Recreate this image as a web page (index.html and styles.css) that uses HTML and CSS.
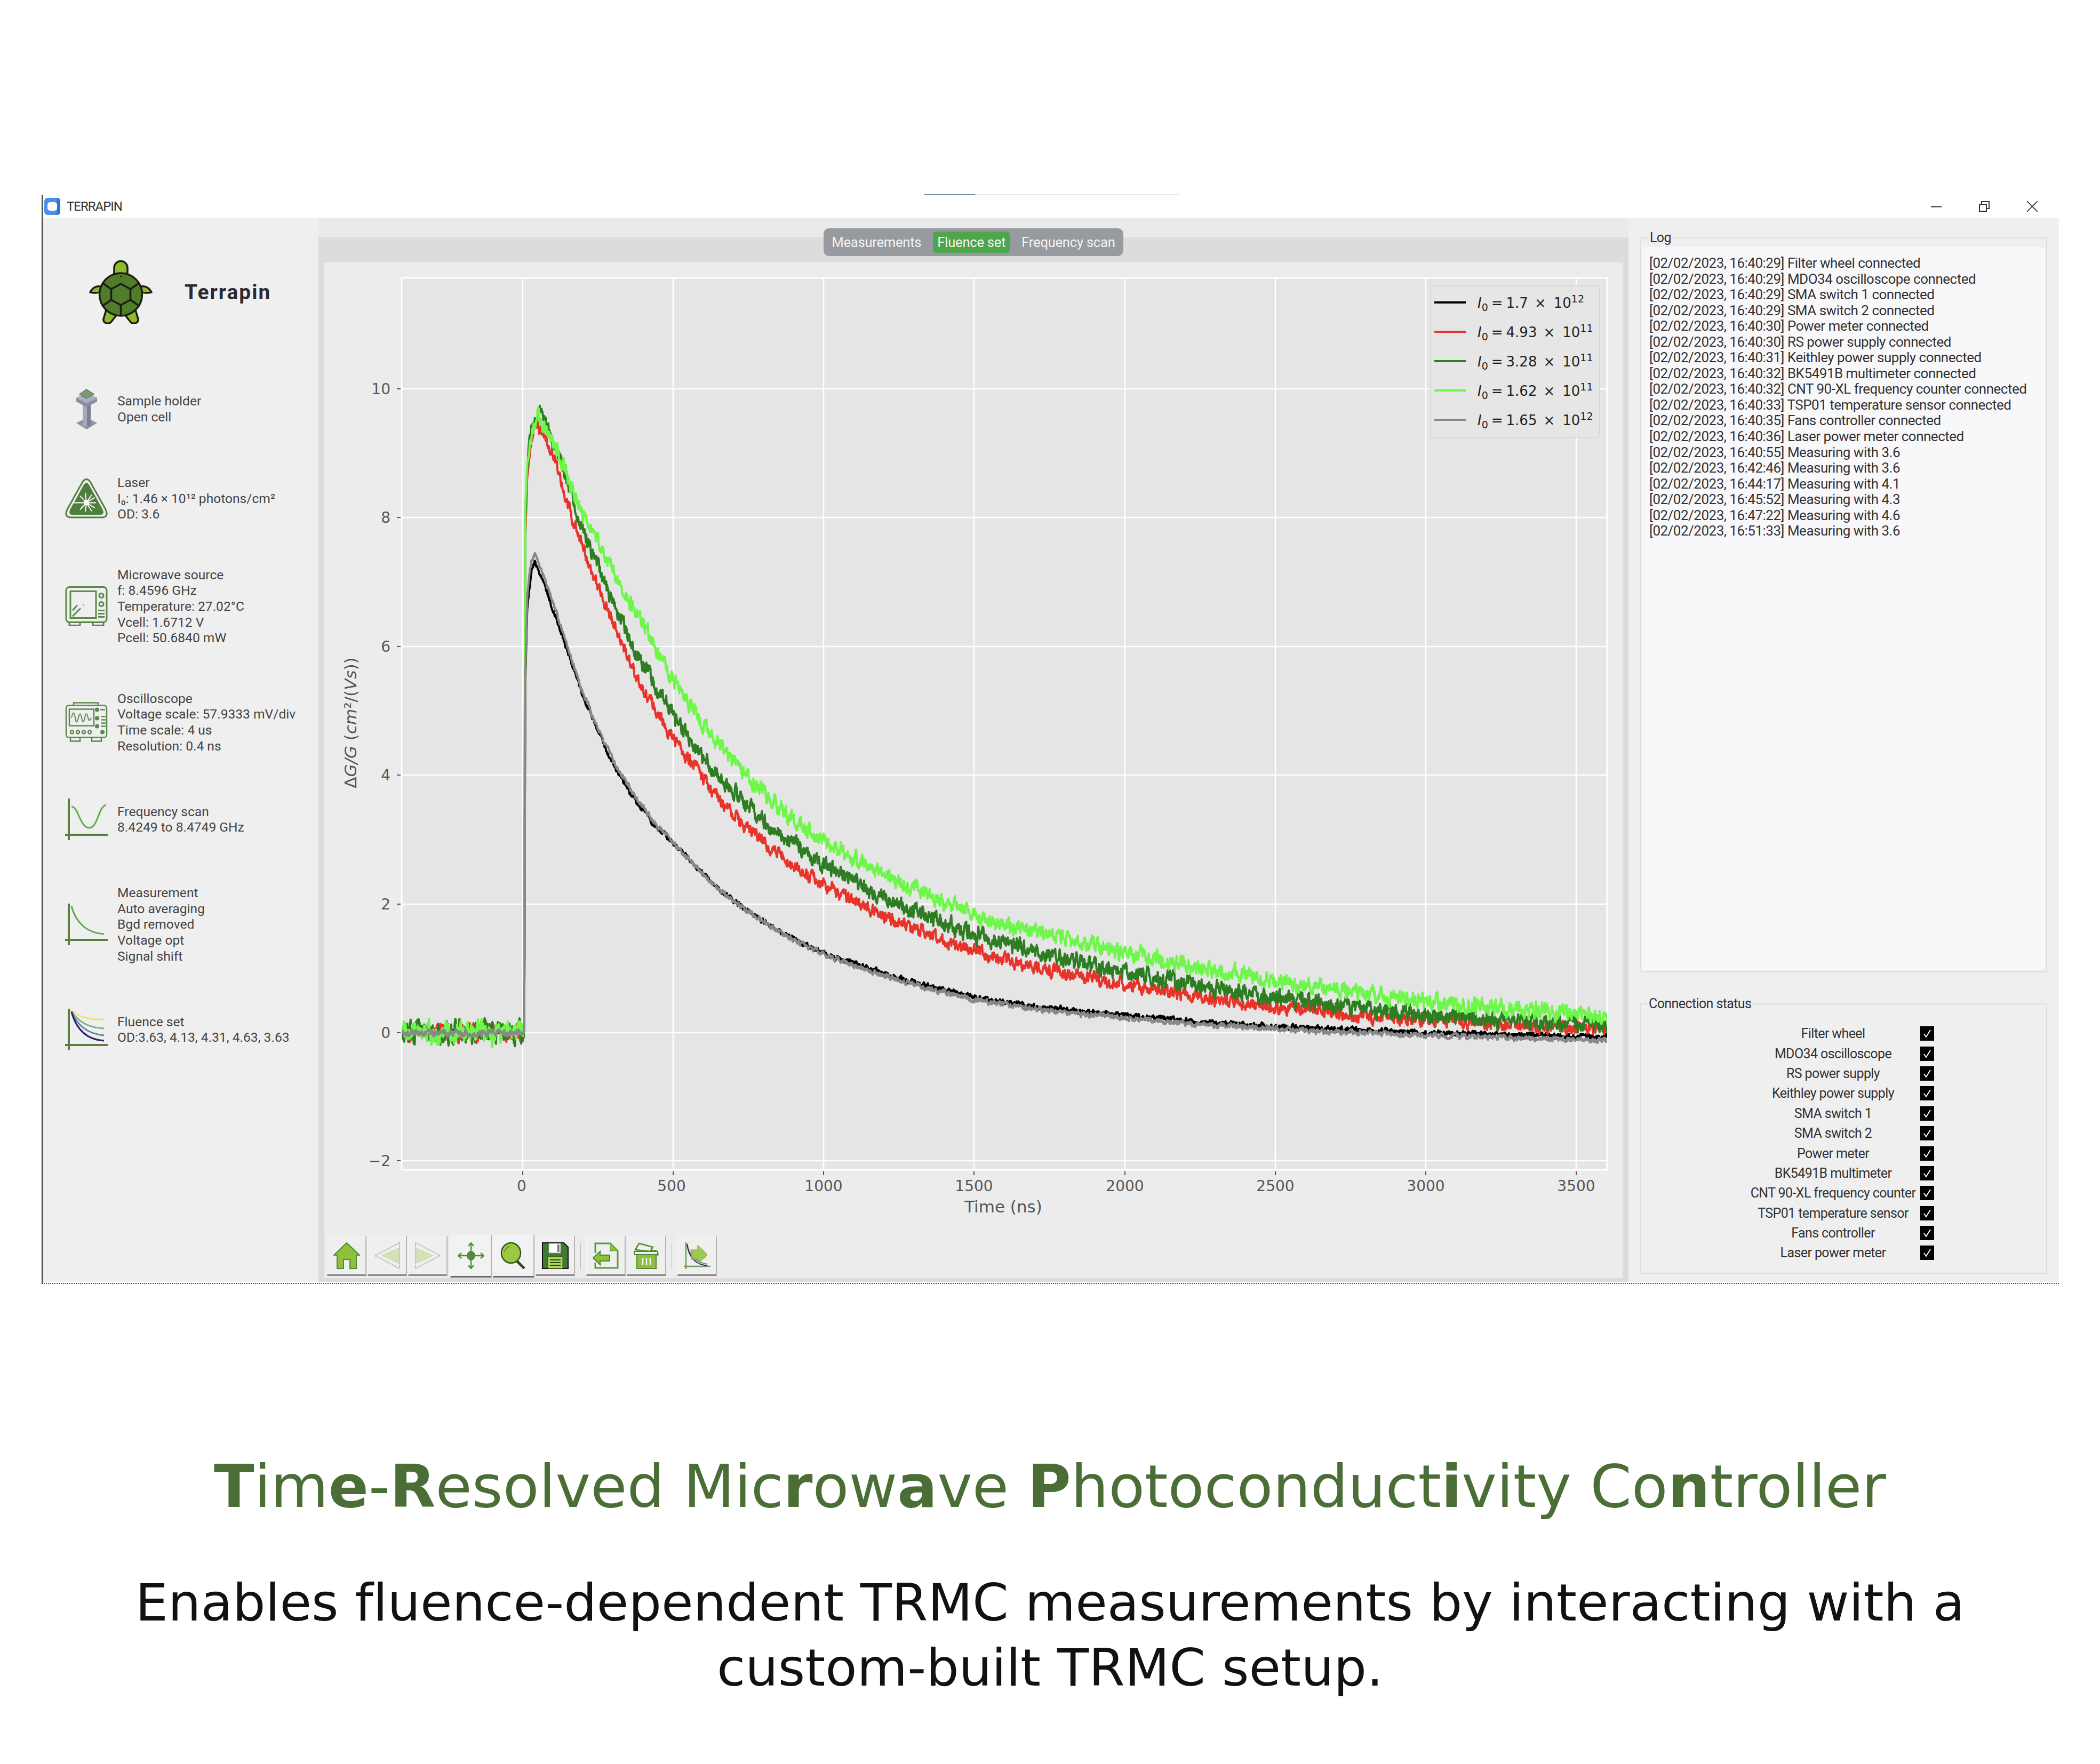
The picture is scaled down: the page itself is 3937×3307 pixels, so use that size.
FILE: index.html
```html
<!DOCTYPE html>
<html lang="en">
<head>
  <meta charset="UTF-8" />
  <title>Terrapin</title>
  <link rel="stylesheet" href="styles.css">
</head>
<body>
  <svg class="defs">
    <symbol id="tick" viewBox="0 0 26 27"><path d="M7 14l4 6 8-13" fill="none" stroke="#fff" stroke-width="2"/></symbol>
    <symbol id="axes" viewBox="0 0 80 78"><path d="M7 0v78M0 68h80" fill="none" stroke="#5a7f3f" stroke-width="4"/></symbol>
  </svg>

  <div class="window">
    <span class="top-dots"></span>
    <div class="titlebar">
      <svg class="app-icon" viewBox="0 0 30 32"><rect width="30" height="32" rx="6" fill="#4a90e6"/><path d="M24 0a6 6 0 0 1 6 6v20a6 6 0 0 1-6 6z" fill="#2f78cf"/><rect x="6" y="8" width="18" height="16" rx="5" fill="#fff"/></svg>
      <span class="app-name">TERRAPIN</span>
      <div class="win-controls">
        <svg viewBox="0 0 20 20"><path d="M0 10.5h20" stroke="#333" stroke-width="2"/></svg>
        <svg viewBox="0 0 20 20"><path d="M1 6h13v13H1zM5 6V1h14v13h-5" fill="none" stroke="#333" stroke-width="2"/></svg>
        <svg viewBox="0 0 20 20"><path d="M0 0l20 20M20 0L0 20" stroke="#333" stroke-width="1.8"/></svg>
      </div>
    </div>

    <div class="content">
      <aside class="sidebar">
        <div class="brand">
          <svg class="turtle" viewBox="0 0 119 119">
            <g stroke="#1c1c12" stroke-width="3.5" stroke-linejoin="round" fill="#8dbb2e">
              <path d="M47 27V14a12.500 12.500 0 0 1 25 0v13z"/>
              <path d="M24 50C14 46 6 52 2 60c8 2 18 1 25-3z"/>
              <path d="M95 50c10-4 18 2 22 10-8 2-18 1-25-3z"/>
              <path d="M33 90l-6 20c-1 7 8 11 14 6l11-14z"/>
              <path d="M86 90l6 20c1 7-8 11-14 6L67 102z"/>
              <circle cx="59.500" cy="64" r="40" fill="#4f7d2c"/>
              <path d="M59.500 44l18 10v20l-18 10-18-10V54z" fill="#4f7d2c"/>
              <path d="M41.500 54L26 43M77.500 54L93 43M41.500 74L26 85M77.500 74L93 85M59.500 84v20" fill="none"/>
            </g>
            <circle cx="59.500" cy="30" r="1.500" fill="#1c1c12"/>
          </svg>
          <span class="brand-name">Terrapin</span>
        </div>

        <div class="instrument">
          <div class="inst-icon">
            <svg class="holder" viewBox="0 0 39 76">
              <path d="M0 64l19.500-10L39 64 19.500 76z" fill="#8f93a6"/>
              <path d="M12 28h8v42h-8z" fill="#a4a8b8"/><path d="M20 28h7v42h-7z" fill="#7b7f93"/>
              <path d="M0 17L19.500 7 39 17v7L19.500 34 0 24z" fill="#8a8ea2"/>
              <path d="M0 17L19.500 7 39 17 19.500 27z" fill="#abafbd"/>
              <path d="M6 10L19 1l14 9-14 8z" fill="#7d9a76" stroke="#5e7c6a" stroke-width="1.500"/>
            </svg>
          </div>
          <p>Sample holder<br>Open cell</p>
        </div>

        <div class="instrument">
          <div class="inst-icon">
            <svg viewBox="0 0 80 79">
              <path d="M33 8q7-9 14 0l29 52q8 16-8 16H12q-16 0-8-16z" fill="none" stroke="#4f7f3f" stroke-width="3"/>
              <path d="M35 14q5-7 10 0l26 47q4 10-5 10H14q-9 0-5-10z" fill="#4f7f3f"/>
              <path d="M14 48h26M40 48l18 0M40 48l16-10M40 48l10-15M40 48l-2-18M40 48l-12-13M40 48l16 10M40 48l10 16M40 48l-2 17M40 48l-12 13" stroke="#fff" stroke-width="2"/>
              <circle cx="40" cy="48" r="5" fill="#fff"/>
            </svg>
          </div>
          <p>Laser<br>I₀: 1.46 × 10¹² photons/cm²<br>OD: 3.6</p>
        </div>

        <div class="instrument">
          <div class="inst-icon">
            <svg viewBox="0 0 80 77">
              <g fill="none" stroke="#5a8a4a" stroke-width="3">
                <path d="M8 68v6h20v-6M52 68v6h20v-6"/>
                <rect x="2" y="2" width="76" height="66" rx="6"/>
                <rect x="10" y="10" width="48" height="50"/>
                <path d="M14 46l9-10M14 57l15-15M34 36l1-1"/>
                <circle cx="68" cy="18" r="4"/><circle cx="68" cy="34" r="4"/>
                <path d="M62 46h12M62 52h12M62 58h12"/>
              </g>
            </svg>
          </div>
          <p>Microwave source<br>f: 8.4596 GHz<br>Temperature: 27.02°C<br>Vcell: 1.6712 V<br>Pcell: 50.6840 mW</p>
        </div>

        <div class="instrument">
          <div class="inst-icon">
            <svg viewBox="0 0 80 77">
              <g fill="none" stroke="#5a8a4a" stroke-width="2.500">
                <path d="M16 7V2h46v5M10 67v7h18v-7M50 67v7h18v-7"/>
                <rect x="2" y="7" width="76" height="60" rx="5"/>
                <rect x="8" y="14" width="46" height="31"/>
                <path d="M12 30c3-12 5-12 7 0s4 9 6 0 4-10 6 0 4 10 6 0 4-9 6 0 4 4 6 0" stroke-width="2"/>
                <circle cx="13" cy="57" r="3"/><circle cx="24" cy="57" r="3"/><circle cx="35" cy="57" r="3"/><circle cx="46" cy="57" r="3"/>
                <path d="M66 15h9M68 28h8M68 34h8M68 40h8M68 46h8"/>
              </g>
              <g fill="#5a8a4a"><circle cx="60" cy="15" r="4"/><circle cx="60" cy="31" r="4"/><circle cx="60" cy="46" r="4"/><circle cx="70" cy="57" r="4"/></g>
            </svg>
          </div>
          <p>Oscilloscope<br>Voltage scale: 57.9333 mV/div<br>Time scale: 4 us<br>Resolution: 0.4 ns</p>
        </div>

        <div class="instrument">
          <div class="inst-icon">
            <svg viewBox="0 0 80 78">
              <use href="#axes"/>
              <path d="M12 15c13 0 16 40 33 40s17-40 32-43" fill="none" stroke="#62a84b" stroke-width="3"/>
            </svg>
          </div>
          <p>Frequency scan<br>8.4249 to 8.4749 GHz</p>
        </div>

        <div class="instrument">
          <div class="inst-icon">
            <svg viewBox="0 0 80 78">
              <use href="#axes"/>
              <path d="M12 5c8 30 28 50 61 52" fill="none" stroke="#62a84b" stroke-width="3"/>
            </svg>
          </div>
          <p>Measurement<br>Auto averaging<br>Bgd removed<br>Voltage opt<br>Signal shift</p>
        </div>

        <div class="instrument">
          <div class="inst-icon">
            <svg viewBox="0 0 80 78">
              <use href="#axes"/>
              <g fill="none" stroke-width="3">
                <path d="M12 3c13 12 33 18 61 17" stroke="#f0e36a"/>
                <path d="M12 5c13 20 33 31 61 32" stroke="#7fae8f"/>
                <path d="M12 5c10 25 28 42 61 45" stroke="#5f8aa0"/>
                <path d="M12 6c8 29 26 52 61 54" stroke="#33206b"/>
              </g>
            </svg>
          </div>
          <p>Fluence set<br>OD:3.63, 4.13, 4.31, 4.63, 3.63</p>
        </div>
      </aside>

      <main class="pane">
        <nav class="tabs">
          <span class="tab">Measurements</span>
          <span class="tab tab-active">Fluence set</span>
          <span class="tab">Frequency scan</span>
        </nav>
        <div class="frame">
          <svg class="chart" viewBox="608 492 2434 1825">
            <defs><clipPath id="plot-clip"><rect x="753" y="521" width="2260" height="1672"/></clipPath></defs>
            <rect x="753" y="521" width="2260" height="1672" fill="#e5e5e5" stroke="#fff" stroke-width="3"/>
            <path class="grid" d="M980 521v1672M1262 521v1672M1544 521v1672M1826 521v1672M2109 521v1672M2391 521v1672M2673 521v1672M2955 521v1672M753 729h2260M753 970h2260M753 1212h2260M753 1453h2260M753 1695h2260M753 1936h2260M753 2176h2260"/>
            <path class="ticks" d="M980 2196v7M1262 2196v7M1544 2196v7M1826 2196v7M2109 2196v7M2391 2196v7M2673 2196v7M2955 2196v7M744 729h7M744 970h7M744 1212h7M744 1453h7M744 1695h7M744 1936h7M744 2176h7"/>

            <g class="ytick">
              <text x="732" y="739">10</text>
              <text x="732" y="980">8</text>
              <text x="732" y="1222">6</text>
              <text x="732" y="1463">4</text>
              <text x="732" y="1705">2</text>
              <text x="732" y="1946">0</text>
              <text x="732" y="2186">−2</text>
            </g>
            <g class="xtick">
              <text x="978" y="2233">0</text>
              <text x="1259" y="2233">500</text>
              <text x="1544" y="2233">1000</text>
              <text x="1826" y="2233">1500</text>
              <text x="2109" y="2233">2000</text>
              <text x="2391" y="2233">2500</text>
              <text x="2673" y="2233">3000</text>
              <text x="2955" y="2233">3500</text>
            </g>
            <text class="axis-label" x="1881" y="2273">Time (ns)</text>
            <text class="axis-label" transform="rotate(-90 668 1355)" x="668" y="1355">Δ<tspan class="math">G/G</tspan> (<tspan class="math">cm</tspan>²/(<tspan class="math">Vs</tspan>))</text>

            <g id="traces" clip-path="url(#plot-clip)"></g>

            <rect x="2682" y="536" width="317" height="284" rx="5" fill="#e5e5e5" fill-opacity="0.9" stroke="#d9d9d9" stroke-width="2"/>
            <g stroke-width="4">
              <path d="M2689 567h59" stroke="#000"/>
              <path d="M2689 622h59" stroke="#e8332a"/>
              <path d="M2689 677h59" stroke="#2e7d22"/>
              <path d="M2689 732h59" stroke="#6ef74a"/>
              <path d="M2689 787h59" stroke="#888"/>
            </g>
            <g class="legend-text">
              <text x="2770" y="577"><tspan class="math">I</tspan><tspan class="sub" dy="6">0</tspan><tspan dx="6" dy="-6">=</tspan><tspan dx="6">1.7</tspan><tspan dx="12">×</tspan><tspan dx="14">10</tspan><tspan class="sup" dy="-10">12</tspan></text>
              <text x="2770" y="632"><tspan class="math">I</tspan><tspan class="sub" dy="6">0</tspan><tspan dx="6" dy="-6">=</tspan><tspan dx="6">4.93</tspan><tspan dx="12">×</tspan><tspan dx="14">10</tspan><tspan class="sup" dy="-10">11</tspan></text>
              <text x="2770" y="687"><tspan class="math">I</tspan><tspan class="sub" dy="6">0</tspan><tspan dx="6" dy="-6">=</tspan><tspan dx="6">3.28</tspan><tspan dx="12">×</tspan><tspan dx="14">10</tspan><tspan class="sup" dy="-10">11</tspan></text>
              <text x="2770" y="742"><tspan class="math">I</tspan><tspan class="sub" dy="6">0</tspan><tspan dx="6" dy="-6">=</tspan><tspan dx="6">1.62</tspan><tspan dx="12">×</tspan><tspan dx="14">10</tspan><tspan class="sup" dy="-10">11</tspan></text>
              <text x="2770" y="797"><tspan class="math">I</tspan><tspan class="sub" dy="6">0</tspan><tspan dx="6" dy="-6">=</tspan><tspan dx="6">1.65</tspan><tspan dx="12">×</tspan><tspan dx="14">10</tspan><tspan class="sup" dy="-10">12</tspan></text>
            </g>
          </svg>

          <div class="toolbar">
            <button class="tool">
              <svg viewBox="0 0 50 50"><path d="M25 1l24 23h-6v25H31V32H19v17H7V24H1z" fill="#8fc03c" stroke="#4f8a2c" stroke-width="2"/></svg>
            </button>
            <button class="tool">
              <svg viewBox="0 0 50 50"><path d="M48 1L2 25l46 24z" fill="none" stroke="#a3b596" stroke-width="2" stroke-dasharray="2 1.500"/><path d="M46 11L16 25l30 14z" fill="#d3e4b4" stroke="#a3b596" stroke-dasharray="2 1.500"/></svg>
            </button>
            <button class="tool">
              <svg viewBox="0 0 50 50"><path d="M2 1l46 24L2 49z" fill="none" stroke="#a3b596" stroke-width="2" stroke-dasharray="2 1.500"/><path d="M4 11l30 14L4 39z" fill="#d3e4b4" stroke="#a3b596" stroke-dasharray="2 1.500"/></svg>
            </button>
            <button class="tool tool-on tool-first">
              <svg viewBox="0 0 50 50"><ellipse cx="25" cy="25" rx="8" ry="9" fill="#4f8a3c"/><path d="M25 1v48M1 25h48M20 7l5-6 5 6M20 43l5 6 5-6M7 20l-6 5 6 5M43 20l6 5-6 5" fill="none" stroke="#4f8a3c" stroke-width="2.500"/></svg>
            </button>
            <button class="tool tool-on">
              <svg viewBox="0 0 50 50"><path d="M30 34l15 15" stroke="#2d4a20" stroke-width="5"/><ellipse cx="20" cy="20" rx="18" ry="19" fill="#9bc840" stroke="#33531f" stroke-width="2.500"/><path d="M8 18c1-6 5-9 10-10" fill="none" stroke="#33531f"/></svg>
            </button>
            <button class="tool">
              <svg viewBox="0 0 50 50"><path d="M1 1h40l8 8v40H1z" fill="#3f7a2e" stroke="#111" stroke-width="2"/><path d="M13 2h22v18H13z" fill="#fff" stroke="#9a9a9a"/><path d="M28 4h5v14h-5z" fill="#8c8c8c"/><path d="M11 27h28v22H11z" fill="#b3d452" stroke="#2a4a1c"/><path d="M15 33h20M15 38h20M15 43h20" stroke="#2a4a1c" stroke-width="2"/></svg>
            </button>
            <span class="tool-sep"></span>
            <button class="tool">
              <svg viewBox="0 0 50 50"><path d="M5 20V2h28l14 14v32H5V38" fill="none" stroke="#5a9a3c" stroke-width="3"/><path d="M33 2l14 14H33z" fill="#8fc03c" stroke="#5a9a3c"/><path d="M1 29l13-12v7h18v11H14v7z" fill="#8fc03c" stroke="#4f8a2c" stroke-width="2"/></svg>
            </button>
            <button class="tool">
              <svg viewBox="0 0 50 50"><path d="M4 14l7-12 26 7-5 8zM32 17c8-4 16-1 14 8" fill="#efefef" stroke="#4f8a2c" stroke-width="2.500"/><path d="M2 17h44v6H2z" fill="#efefef" stroke="#4f8a2c" stroke-width="2"/><path d="M7 23h36v26H7z" fill="#8fc03c" stroke="#4f8a2c" stroke-width="2"/><path d="M18 29v14M25 29v14M32 29v14" stroke="#f2f2f2" stroke-width="2.500"/></svg>
            </button>
            <span class="tool-sep"></span>
            <button class="tool">
              <svg viewBox="0 0 50 50"><path d="M4 0v50M0 45h50" stroke="#6e9a55" stroke-width="2.500"/><path d="M6 3c4 14 14 26 38 27" fill="none" stroke="#f0e36a" stroke-width="2"/><path d="M6 3c4 22 16 34 38 38" fill="none" stroke="#5f8aa0" stroke-width="2"/><path d="M6 3c3 24 14 38 38 41" fill="none" stroke="#33206b" stroke-width="2"/><path d="M14 14h12V5l18 18-18 18v-9H14z" fill="#8fc03c" fill-opacity="0.85" stroke="#6e9a55"/></svg>
            </button>
          </div>
        </div>
      </main>

      <aside class="side-right">
        <fieldset class="group log-group">
          <legend>Log</legend>
<pre class="log">[02/02/2023, 16:40:29] Filter wheel connected
[02/02/2023, 16:40:29] MDO34 oscilloscope connected
[02/02/2023, 16:40:29] SMA switch 1 connected
[02/02/2023, 16:40:29] SMA switch 2 connected
[02/02/2023, 16:40:30] Power meter connected
[02/02/2023, 16:40:30] RS power supply connected
[02/02/2023, 16:40:31] Keithley power supply connected
[02/02/2023, 16:40:32] BK5491B multimeter connected
[02/02/2023, 16:40:32] CNT 90-XL frequency counter connected
[02/02/2023, 16:40:33] TSP01 temperature sensor connected
[02/02/2023, 16:40:35] Fans controller connected
[02/02/2023, 16:40:36] Laser power meter connected
[02/02/2023, 16:40:55] Measuring with 3.6
[02/02/2023, 16:42:46] Measuring with 3.6
[02/02/2023, 16:44:17] Measuring with 4.1
[02/02/2023, 16:45:52] Measuring with 4.3
[02/02/2023, 16:47:22] Measuring with 4.6
[02/02/2023, 16:51:33] Measuring with 3.6</pre>
        </fieldset>
        <fieldset class="group status-group">
          <legend>Connection status</legend>
          <div class="status-list">
            <span>Filter wheel</span><svg class="check"><use href="#tick"/></svg>
            <span>MDO34 oscilloscope</span><svg class="check"><use href="#tick"/></svg>
            <span>RS power supply</span><svg class="check"><use href="#tick"/></svg>
            <span>Keithley power supply</span><svg class="check"><use href="#tick"/></svg>
            <span>SMA switch 1</span><svg class="check"><use href="#tick"/></svg>
            <span>SMA switch 2</span><svg class="check"><use href="#tick"/></svg>
            <span>Power meter</span><svg class="check"><use href="#tick"/></svg>
            <span>BK5491B multimeter</span><svg class="check"><use href="#tick"/></svg>
            <span>CNT 90-XL frequency counter</span><svg class="check"><use href="#tick"/></svg>
            <span>TSP01 temperature sensor</span><svg class="check"><use href="#tick"/></svg>
            <span>Fans controller</span><svg class="check"><use href="#tick"/></svg>
            <span>Laser power meter</span><svg class="check"><use href="#tick"/></svg>
          </div>
        </fieldset>
      </aside>
    </div>
  </div>

  <h2 class="headline"><b>T</b>im<b>e</b>-<b>R</b>esolved Mic<b>r</b>ow<b>a</b>ve <b>P</b>hotoconduct<b>i</b>vity Co<b>n</b>troller</h2>
  <p class="blurb">Enables fluence-dependent TRMC measurements by interacting with a<br>custom-built TRMC setup.</p>

  <script src="chart.js"></script>
</body>
</html>
```

FILE: styles.css
```css
* {
  box-sizing: border-box;
  margin: 0;
  padding: 0;
}
body {
  background: #fff;
  color: #222;
  font-family: Roboto, sans-serif;
  padding-top: 365px;
}
.defs {
  display: none;
}
.window {
  position: relative;
  width: 3782px;
  height: 2042px;
  margin-left: 78px;
  border-left: 2px solid #333;
  border-bottom: 2px dotted #444;
}
.top-dots {
  position: absolute;
  top: -1px;
  left: 1652px;
  width: 478px;
  height: 2px;
  background: linear-gradient(to right, #7d8ba8 20%, #e8e8e8 20%);
}

/* title bar */
.titlebar {
  display: flex;
  align-items: center;
  height: 44px;
  padding-left: 3px;
}
.app-icon {
  width: 30px;
  height: 32px;
}
.app-name {
  margin-left: 12px;
  font-size: 24px;
  color: #333;
  letter-spacing: -1px;
}
.win-controls {
  display: flex;
  gap: 70px;
  margin-left: auto;
  margin-right: 40px;
}
.win-controls svg {
  width: 20px;
  height: 20px;
}

.content {
  display: flex;
  height: 1994px;
}

/* left column */
.sidebar {
  display: flex;
  flex-direction: column;
  gap: 84px;
  width: 517px;
  padding: 79px 0 0 42px;
  background: #efefef;
}
.brand {
  display: flex;
  align-items: center;
  gap: 60px;
  height: 119px;
  margin: 0 0 121px 45px;
}
.turtle {
  width: 119px;
  height: 119px;
}
.brand-name {
  font-size: 39px;
  font-weight: 700;
  color: #2a2a33;
  letter-spacing: 2px;
}
.instrument {
  display: flex;
  align-items: center;
  gap: 18px;
  min-height: 78px;
  font-size: 24.6px;
  line-height: 29.6px;
  color: #444;
}
.inst-icon {
  display: flex;
  justify-content: center;
  width: 80px;
  flex-shrink: 0;
}
.inst-icon svg {
  width: 80px;
  height: 78px;
}
.inst-icon .holder {
  width: 39px;
  height: 76px;
}
.brand + .instrument {
  margin-top: -84px;
}

/* middle column */
.pane {
  display: flex;
  flex-direction: column;
  width: 2456px;
  padding-top: 19px;
  background: #eaeaea;
}
.tabs {
  position: relative;
  z-index: 1;
  display: flex;
  align-items: center;
  align-self: center;
  height: 52px;
  padding: 0 7px;
  background: #979b9f;
  border-radius: 10px;
  font-size: 25.5px;
  color: #f4f4f4;
}
.tab {
  padding: 5px 8px;
  letter-spacing: -0.2px;
  border-radius: 6px;
  line-height: 30px;
}
.tab-active {
  margin: 0 14px;
  background: #4fa64a;
}
.frame {
  flex: 1;
  margin-top: -35px;
  background: #ececec;
  border-style: solid;
  border-color: #dcdcdc;
  border-width: 47px 11px 7px;
}
.chart {
  display: block;
  width: 2434px;
  height: 1825px;
}
.grid {
  fill: none;
  stroke: #fff;
  stroke-width: 2.5;
}
.ticks {
  fill: none;
  stroke: #555;
  stroke-width: 2;
}
.ytick text, .xtick text, .axis-label, .legend-text {
  font-family: "DejaVu Sans", sans-serif;
  fill: #555;
}
.ytick text {
  font-size: 28px;
  text-anchor: end;
}
.xtick text {
  font-size: 28px;
  text-anchor: middle;
}
.axis-label {
  font-size: 31px;
  text-anchor: middle;
}
.math {
  font-style: italic;
}
.legend-text {
  font-size: 26px;
  fill: #222;
}
.sub, .sup {
  font-size: 19px;
}

.toolbar {
  display: flex;
  align-items: center;
  gap: 2px;
  height: 75px;
  padding-left: 5px;
}
.tool {
  display: flex;
  align-items: center;
  justify-content: center;
  width: 74px;
  height: 75px;
  background: #efefef;
  border: 1px solid #f5f5f5;
  border-right: 2px solid #b5b5b5;
  border-bottom: 3px solid #8a8a8a;
}
.tool svg {
  width: 50px;
  height: 50px;
}
.tool-on {
  width: 78px;
  height: 80px;
  background: #f2f2f2;
  border-bottom-color: #666;
}
.tool-first {
  margin-left: 3px;
}
.tool-sep {
  width: 1px;
  height: 48px;
  margin: 0 8px;
  background: #bbb;
}

/* right column */
.side-right {
  display: flex;
  flex-direction: column;
  width: 807px;
  padding: 22px 22px 0 21px;
  background: #efefef;
}
.group {
  border: 2px solid #dedede;
  font-size: 25px;
  color: #333;
  letter-spacing: -0.6px;
}
.group legend {
  margin-left: 13px;
  padding: 0 2px;
  line-height: 30px;
}
.log-group {
  height: 1392px;
  padding: 2px;
}
.log {
  height: 1356px;
  padding: 16px 14px;
  background: #f8f8fb;
  border-radius: 6px;
  font-family: Roboto, sans-serif;
  font-size: 26px;
  line-height: 29.55px;
  letter-spacing: -0.5px;
  color: #333;
}
.status-group {
  height: 521px;
  margin-top: 44px;
  padding: 22px 4px 0 0;
}
.status-list {
  display: grid;
  grid-template-columns: auto 26px;
  justify-content: center;
  align-items: center;
  column-gap: 9px;
  grid-auto-rows: 37.4px;
  text-align: center;
}
.check {
  width: 26px;
  height: 27px;
  background: #000;
}

/* caption under the screenshot */
.headline {
  margin-top: 315px;
  font-family: "DejaVu Sans", sans-serif;
  font-size: 111px;
  font-weight: 400;
  line-height: 130px;
  color: #4a6e35;
  text-align: center;
}
.blurb {
  margin-top: 92px;
  font-family: "DejaVu Sans", sans-serif;
  font-size: 97px;
  font-variant-ligatures: none;
  line-height: 122px;
  color: #111;
  text-align: center;
}
```

FILE: chart.js
```js
// Noisy decay traces for the fluence set plot, drawn into #traces
const X0 = 979.5, XS = 0.5646, Y0 = 1936, YS = 120.7;

// [t in ns, value] control points, read off the plot
const traces = [
  { color: '#000', base: 0.02, tail: 0.016, pts: [[6, 0], [9, 5.4], [16, 6.6], [30, 7.2], [42, 7.32], [100, 6.6], [200, 5.25], [300, 4.2], [400, 3.45], [500, 2.95], [700, 2.05], [1000, 1.25], [1500, 0.56], [2000, 0.27], [2500, 0.1], [3000, 0], [3600, -0.06]] },
  { color: '#e8332a', base: 0.05, tail: 0.04, pts: [[6, 0], [9, 7.6], [16, 8.7], [30, 9.2], [50, 9.45], [100, 9], [164, 8], [304, 6.35], [400, 5.35], [500, 4.6], [700, 3.4], [1000, 2.3], [1500, 1.27], [2000, 0.75], [2500, 0.4], [3000, 0.19], [3600, 0.04]] },
  { color: '#2e7d22', base: 0.07, tail: 0.05, pts: [[6, 0], [9, 7.8], [16, 8.9], [30, 9.4], [55, 9.65], [110, 9.1], [187, 8], [349, 6.2], [500, 4.95], [700, 3.75], [1000, 2.6], [1500, 1.54], [2000, 0.95], [2500, 0.55], [3000, 0.28], [3600, 0.1]] },
  { color: '#6ef74a', base: 0.065, tail: 0.05, pts: [[6, 0], [9, 8], [16, 8.95], [30, 9.3], [50, 9.6], [110, 9.1], [208, 8], [376, 6.54], [500, 5.5], [700, 4.2], [1000, 2.98], [1500, 1.85], [2000, 1.25], [2500, 0.82], [3000, 0.48], [3600, 0.26]] },
  { color: '#888', base: 0.022, tail: 0.016, pts: [[6, 0], [9, 5.5], [16, 6.8], [30, 7.35], [42, 7.45], [100, 6.7], [200, 5.3], [300, 4.25], [400, 3.5], [500, 2.95], [700, 2.05], [1000, 1.22], [1500, 0.52], [2000, 0.23], [2500, 0.06], [3000, -0.04], [3600, -0.12]] },
];

let seed = 20230202;
function rand() {
  seed = (seed * 1664525 + 1013904223) % 4294967296;
  return seed / 4294967296 - 0.5;
}

// hermite through the control points, straight lines on the fast rise
function valueAt(pts, t) {
  if (t <= pts[0][0]) return 0;
  for (let i = 1; i < pts.length; i++) {
    if (t > pts[i][0]) continue;
    const [t0, v0] = pts[i - 1];
    const [t1, v1] = pts[i];
    const h = t1 - t0, u = (t - t0) / h;
    if (t0 < 100 || i === pts.length - 1) return v0 + (v1 - v0) * u;
    const m0 = (v1 - pts[i - 2][1]) / (t1 - pts[i - 2][0]);
    const m1 = (pts[i + 1][1] - v0) / (pts[i + 1][0] - t0);
    return (2*u*u*u - 3*u*u + 1) * v0 + (u*u*u - 2*u*u + u) * h * m0
      + (-2*u*u*u + 3*u*u) * v1 + (u*u*u - u*u) * h * m1;
  }
  return pts[pts.length - 1][1];
}

const group = document.getElementById('traces');
traces.forEach(trace => {
  const coords = [];
  let smooth = 0;
  for (let t = -400; t <= 3605; t += 1.5) {
    smooth = 0.55 * smooth + rand() * 2;
    const amp = t < 6 ? trace.base : trace.tail;
    const v = valueAt(trace.pts, t) + smooth * amp * 2;
    coords.push((X0 + t * XS).toFixed(1) + ',' + (Y0 - v * YS).toFixed(1));
  }
  const line = document.createElementNS('http://www.w3.org/2000/svg', 'polyline');
  line.setAttribute('points', coords.join(' '));
  line.setAttribute('fill', 'none');
  line.setAttribute('stroke', trace.color);
  line.setAttribute('stroke-width', '4');
  line.setAttribute('stroke-linejoin', 'round');
  group.appendChild(line);
});
```
